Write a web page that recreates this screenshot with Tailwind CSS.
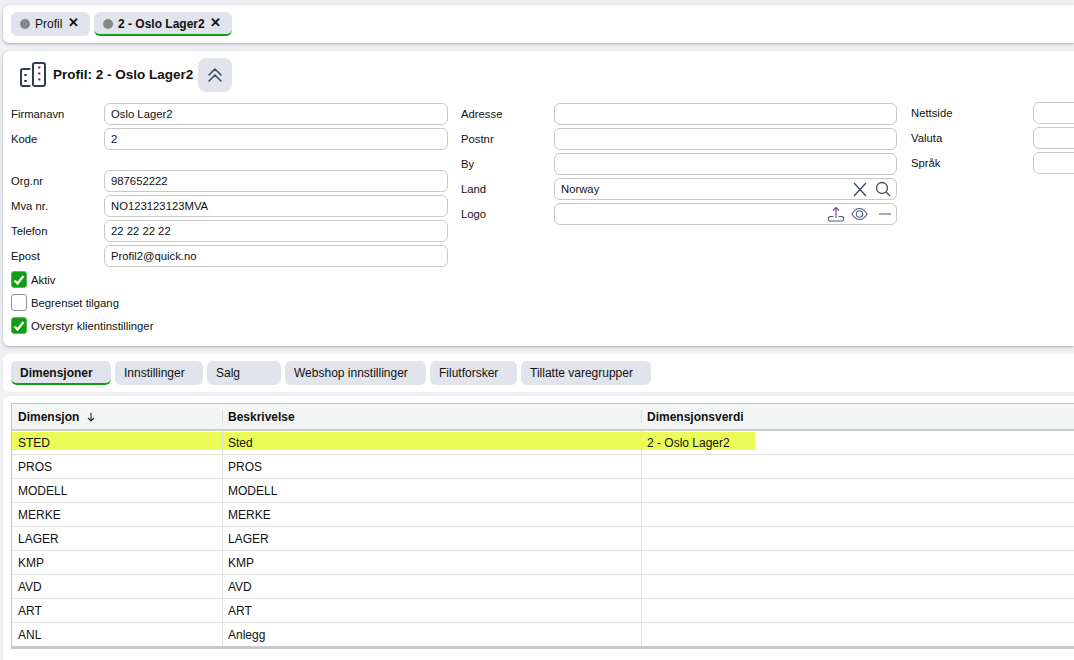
<!DOCTYPE html>
<html lang="no">
<head>
    <meta charset="UTF-8">
    <title>Profil: 2 - Oslo Lager2</title>
    <script src="https://cdn.jsdelivr.net/npm/@tailwindcss/browser@4"></script>
</head>
<body class="bg-[#eef0f3] font-['Liberation_Sans',Arial,sans-serif] text-[12px] text-[#111] overflow-hidden">
<div class="w-[1074px] h-[660px] overflow-hidden pl-[3px] pt-[5px]">

    <!-- Open tabs -->
    <div class="h-[38px] bg-white rounded-l-md shadow-[0_1px_3px_rgba(0,0,0,0.3)] flex items-center gap-[4px] pl-[8px] pb-[1px]">
        <div class="w-[79px] h-[24px] bg-[#e1e4ec] rounded-md flex items-center pl-[9px] pt-[1px]">
            <span class="w-[10px] h-[10px] rounded-full bg-[#878787]"></span>
            <span class="ml-[5px]">Profil</span>
            <span class="ml-[6px] text-[13px] font-bold leading-none mb-[3px]">✕</span>
        </div>
        <div class="w-[138px] h-[24px] bg-[#e1e4ec] rounded-md border-b-2 border-[#0f9d12] flex items-center pl-[9px] pt-[3px]">
            <span class="w-[10px] h-[10px] rounded-full bg-[#878787]"></span>
            <span class="ml-[5px] font-bold">2 - Oslo Lager2</span>
            <span class="ml-[5px] text-[13px] font-bold leading-none mb-[3px]">✕</span>
        </div>
    </div>

    <!-- Profile form -->
    <div class="mt-[8px] h-[295px] bg-white rounded-l-md shadow-[0_1px_3px_rgba(0,0,0,0.3)] pl-[8px]">
        <div class="h-[48px] mb-[4px] flex items-center">
            <svg class="w-[28px] h-[28px] ml-[8px] shrink-0" viewBox="0 0 28 28" fill="none" stroke="#2f3d55" stroke-width="2" stroke-linecap="round" stroke-linejoin="round">
                <path d="M10.500 8H4a2 2 0 0 0-2 2v13a2 2 0 0 0 2 2h6.500"/>
                <rect x="14" y="2" width="12" height="23" rx="2"/>
                <path d="M6 14h1M6 20h1M20 6.500h.5M20 12.500h.5M20 18.500h.5"/>
            </svg>
            <span class="ml-[6px] text-[13.5px] font-bold">Profil: 2 - Oslo Lager2</span>
            <button class="ml-[5px] w-[34px] h-[34px] bg-[#e1e4ec] rounded-lg flex items-center justify-center">
                <svg class="w-[18px] h-[18px]" viewBox="0 0 18 18" fill="none" stroke="#3b4a63" stroke-width="1.6" stroke-linecap="round" stroke-linejoin="round">
                    <path d="M3 9l6-6 6 6M3 15l6-6 6 6"/>
                </svg>
            </button>
        </div>

        <div class="flex text-[11.3px]">
            <!-- Column 1 -->
            <div class="w-[437px] shrink-0 flex flex-col gap-[3px]">
                <div class="flex items-center h-[22px]"><label class="w-[93px]">Firmanavn</label><div class="w-[344px] h-[22px] border border-[#c8c8c8] rounded-md flex items-center pl-[6px]">Oslo Lager2</div></div>
                <div class="flex items-center h-[22px]"><label class="w-[93px]">Kode</label><div class="w-[344px] h-[22px] border border-[#c8c8c8] rounded-md flex items-center pl-[6px]">2</div></div>
                <div class="flex items-center h-[22px] mt-[17px]"><label class="w-[93px]">Org.nr</label><div class="w-[344px] h-[22px] border border-[#c8c8c8] rounded-md flex items-center pl-[6px]">987652222</div></div>
                <div class="flex items-center h-[22px]"><label class="w-[93px]">Mva nr.</label><div class="w-[344px] h-[22px] border border-[#c8c8c8] rounded-md flex items-center pl-[6px]">NO123123123MVA</div></div>
                <div class="flex items-center h-[22px]"><label class="w-[93px]">Telefon</label><div class="w-[344px] h-[22px] border border-[#c8c8c8] rounded-md flex items-center pl-[6px]">22 22 22 22</div></div>
                <div class="flex items-center h-[22px]"><label class="w-[93px]">Epost</label><div class="w-[344px] h-[22px] border border-[#c8c8c8] rounded-md flex items-center pl-[6px]">Profil2@quick.no</div></div>
                <div class="flex flex-col gap-[6px] mt-[1px]">
                    <div class="flex items-center h-[17px] gap-[4px]">
                        <span class="w-[16px] h-[17px] rounded-[3px] bg-[#0f9d12] border border-[#5cb85f] flex items-center justify-center">
                            <svg class="w-[12px] h-[12px]" viewBox="0 0 12 12" fill="none" stroke="white" stroke-width="2.400"><path d="M1.500 6.500l3 3 6-7.500"/></svg>
                        </span>
                        <span class="mt-[1px]">Aktiv</span>
                    </div>
                    <div class="flex items-center h-[17px] gap-[4px]">
                        <span class="w-[16px] h-[17px] rounded-[3px] bg-white border border-[#8f8f8f]"></span>
                        <span class="mt-[1px]">Begrenset tilgang</span>
                    </div>
                    <div class="flex items-center h-[17px] gap-[4px]">
                        <span class="w-[16px] h-[17px] rounded-[3px] bg-[#0f9d12] border border-[#5cb85f] flex items-center justify-center">
                            <svg class="w-[12px] h-[12px]" viewBox="0 0 12 12" fill="none" stroke="white" stroke-width="2.400"><path d="M1.500 6.500l3 3 6-7.500"/></svg>
                        </span>
                        <span class="mt-[1px]">Overstyr klientinstillinger</span>
                    </div>
                </div>
            </div>

            <!-- Column 2 -->
            <div class="w-[450px] shrink-0 ml-[13px] flex flex-col gap-[3px]">
                <div class="flex items-center h-[22px]"><label class="w-[93px]">Adresse</label><div class="w-[343px] h-[22px] border border-[#c8c8c8] rounded-md"></div></div>
                <div class="flex items-center h-[22px]"><label class="w-[93px]">Postnr</label><div class="w-[343px] h-[22px] border border-[#c8c8c8] rounded-md"></div></div>
                <div class="flex items-center h-[22px]"><label class="w-[93px]">By</label><div class="w-[343px] h-[22px] border border-[#c8c8c8] rounded-md"></div></div>
                <div class="flex items-center h-[22px]"><label class="w-[93px]">Land</label>
                    <div class="w-[343px] h-[22px] border border-[#c8c8c8] rounded-md flex items-center pl-[6px] pr-[4px]">
                        <span class="flex-1">Norway</span>
                        <svg class="w-[16px] h-[16px]" viewBox="0 0 16 16" fill="none" stroke="#3b4a63" stroke-width="1.300"><path d="M2 2l12 13M14 2L2 15"/></svg>
                        <svg class="w-[16px] h-[16px] ml-[7px] mr-[1px]" viewBox="0 0 16 16" fill="none" stroke="#3b4a63" stroke-width="1.300"><circle cx="7" cy="7" r="5.500"/><path d="M11 11l4 4"/></svg>
                    </div>
                </div>
                <div class="flex items-center h-[22px]"><label class="w-[93px]">Logo</label>
                    <div class="w-[343px] h-[22px] border border-[#c8c8c8] rounded-md flex items-center justify-end pr-[5px]">
                        <svg class="w-[16px] h-[16px]" viewBox="0 0 16 16" fill="none" stroke-width="1.100">
                            <path d="M8 12V1.500M5 4.500l3-3 3 3" stroke="#7b3f98"/>
                            <path d="M5.500 10.500H2.500a2 2 0 0 0 0 4.500h11a2 2 0 0 0 0-4.500H10.500" stroke="#4d5f80"/>
                        </svg>
                        <svg class="w-[17px] h-[14px] ml-[7px]" viewBox="0 0 17 14" fill="none" stroke="#4d5f80" stroke-width="1.100"><path d="M1 7c2-3.500 4.500-5.500 7.500-5.500S14 3.500 16 7c-2 3.500-4.500 5.500-7.500 5.500S3 10.500 1 7z"/><circle cx="8.500" cy="7" r="3.200"/></svg>
                        <svg class="w-[12px] h-[12px] ml-[11px]" viewBox="0 0 12 12" fill="none" stroke="#5b6b86" stroke-width="1.100"><path d="M0 6h12"/></svg>
                    </div>
                </div>
            </div>

            <!-- Column 3 -->
            <div class="flex flex-col gap-[3px] -mt-[1px] shrink-0">
                <div class="flex items-center h-[22px]"><label class="w-[122px]">Nettside</label><div class="w-[60px] h-[22px] border border-[#c8c8c8] rounded-md"></div></div>
                <div class="flex items-center h-[22px]"><label class="w-[122px]">Valuta</label><div class="w-[60px] h-[22px] border border-[#c8c8c8] rounded-md"></div></div>
                <div class="flex items-center h-[22px]"><label class="w-[122px]">Språk</label><div class="w-[60px] h-[22px] border border-[#c8c8c8] rounded-md"></div></div>
            </div>
        </div>
    </div>

    <!-- Section tabs -->
    <div class="mt-[8px] h-[38px] bg-white rounded-l-md flex items-center gap-[4px] pl-[8px] pb-[1px]">
        <div class="w-[100px] h-[24px] bg-[#e1e4ec] rounded-md border-b-2 border-[#0f9d12] flex items-center pl-[9px] pt-[3px] font-bold">Dimensjoner</div>
        <div class="w-[88px] h-[24px] bg-[#e1e4ec] rounded-md flex items-center pl-[9px]">Innstillinger</div>
        <div class="w-[74px] h-[24px] bg-[#e1e4ec] rounded-md flex items-center pl-[9px]">Salg</div>
        <div class="w-[141px] h-[24px] bg-[#e1e4ec] rounded-md flex items-center pl-[9px]">Webshop innstillinger</div>
        <div class="w-[87px] h-[24px] bg-[#e1e4ec] rounded-md flex items-center pl-[9px]">Filutforsker</div>
        <div class="w-[130px] h-[24px] bg-[#e1e4ec] rounded-md flex items-center pl-[9px]">Tillatte varegrupper</div>
    </div>

    <!-- Dimension table -->
    <div class="mt-[4px] h-[264px] bg-white rounded-tl-md pl-[8px] pt-[7px]">
        <div class="border-l border-t border-b-[3px] border-t-[#c6c8ca] border-l-[#c6c8ca] border-b-[#c6cbd0] w-[1070px] h-[246px]">
            <div class="flex h-[27px] bg-[#f3f5f5] border-b-2 border-[#c9cbcd] font-bold items-center">
                <div class="w-[210px] pl-[6px] flex items-center">Dimensjon
                    <svg class="w-[10px] h-[10px] ml-[7px]" viewBox="0 0 10 10" fill="none" stroke="#222" stroke-width="1.100"><path d="M5 1v8M2 6l3 3 3-3"/></svg>
                </div>
                <div class="w-[419px] pl-[5px] border-l border-[#d9dbdd] h-[13px] flex items-center">Beskrivelse</div>
                <div class="flex-1 pl-[5px] border-l border-[#d9dbdd] h-[13px] flex items-center">Dimensjonsverdi</div>
            </div>
            <div>
                <div class="flex h-[24px] border-b border-[#e0e0e0] relative">
                    <div class="absolute left-0 top-[1px] w-[743px] h-[18px] bg-[#ecfb58]"></div>
                    <div class="relative w-[210px] pl-[6px] pt-[3px]">STED</div>
                    <div class="relative w-[419px] pl-[5px] pt-[3px] border-l border-[#e0e0e0]">Sted</div>
                    <div class="relative flex-1 pl-[5px] pt-[3px] border-l border-[#e0e0e0]">2 - Oslo Lager2</div>
                </div>
                <div class="flex h-[24px] border-b border-[#e0e0e0]"><div class="w-[210px] pl-[6px] pt-[3px]">PROS</div><div class="w-[419px] pl-[5px] pt-[3px] border-l border-[#e0e0e0]">PROS</div><div class="flex-1 border-l border-[#e0e0e0]"></div></div>
                <div class="flex h-[24px] border-b border-[#e0e0e0]"><div class="w-[210px] pl-[6px] pt-[3px]">MODELL</div><div class="w-[419px] pl-[5px] pt-[3px] border-l border-[#e0e0e0]">MODELL</div><div class="flex-1 border-l border-[#e0e0e0]"></div></div>
                <div class="flex h-[24px] border-b border-[#e0e0e0]"><div class="w-[210px] pl-[6px] pt-[3px]">MERKE</div><div class="w-[419px] pl-[5px] pt-[3px] border-l border-[#e0e0e0]">MERKE</div><div class="flex-1 border-l border-[#e0e0e0]"></div></div>
                <div class="flex h-[24px] border-b border-[#e0e0e0]"><div class="w-[210px] pl-[6px] pt-[3px]">LAGER</div><div class="w-[419px] pl-[5px] pt-[3px] border-l border-[#e0e0e0]">LAGER</div><div class="flex-1 border-l border-[#e0e0e0]"></div></div>
                <div class="flex h-[24px] border-b border-[#e0e0e0]"><div class="w-[210px] pl-[6px] pt-[3px]">KMP</div><div class="w-[419px] pl-[5px] pt-[3px] border-l border-[#e0e0e0]">KMP</div><div class="flex-1 border-l border-[#e0e0e0]"></div></div>
                <div class="flex h-[24px] border-b border-[#e0e0e0]"><div class="w-[210px] pl-[6px] pt-[3px]">AVD</div><div class="w-[419px] pl-[5px] pt-[3px] border-l border-[#e0e0e0]">AVD</div><div class="flex-1 border-l border-[#e0e0e0]"></div></div>
                <div class="flex h-[24px] border-b border-[#e0e0e0]"><div class="w-[210px] pl-[6px] pt-[3px]">ART</div><div class="w-[419px] pl-[5px] pt-[3px] border-l border-[#e0e0e0]">ART</div><div class="flex-1 border-l border-[#e0e0e0]"></div></div>
                <div class="flex h-[23px]"><div class="w-[210px] pl-[6px] pt-[3px]">ANL</div><div class="w-[419px] pl-[5px] pt-[3px] border-l border-[#e0e0e0]">Anlegg</div><div class="flex-1 border-l border-[#e0e0e0]"></div></div>
            </div>
        </div>
    </div>
</div>
</body>
</html>
